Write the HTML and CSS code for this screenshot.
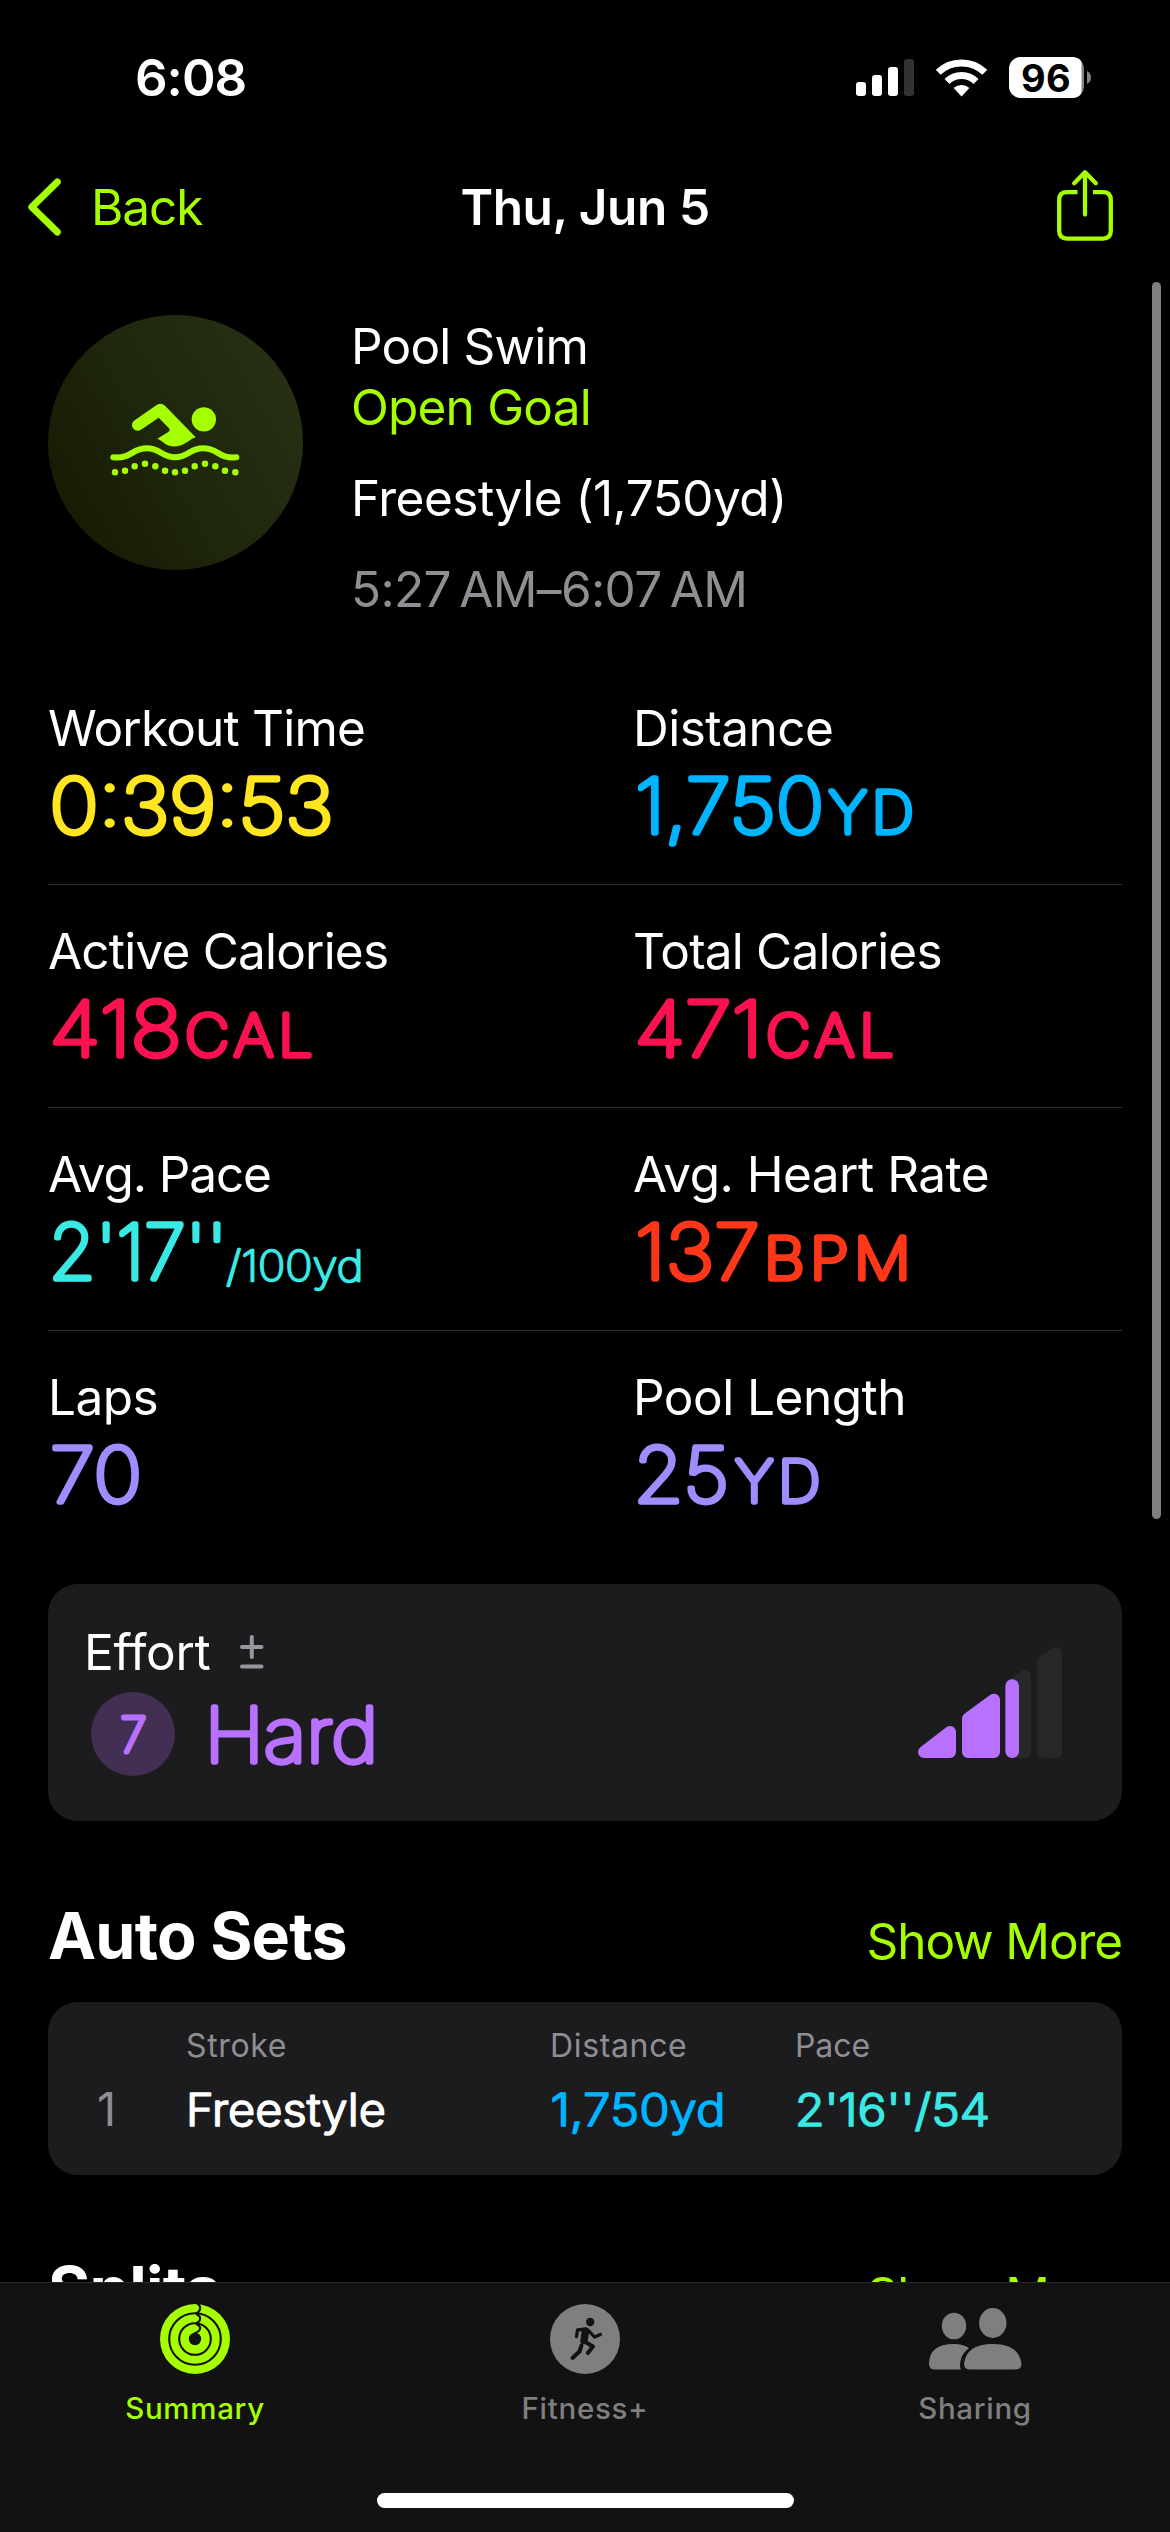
FILE: index.html
```
<!DOCTYPE html>
<html lang="en">
<head>
<meta charset="utf-8">
<title>Workout Summary</title>
<link rel="stylesheet" href="styles.css">
</head>
<body>
<div class="screen">
  <div class="content">
    <div class="status-bar">
      <span class="clock">6:08</span>
      <svg class="status-icons" width="240" height="48" viewBox="0 0 240 48">
        <g fill="#fff">
          <rect x="0" y="27" width="10" height="14" rx="3"/>
          <rect x="16" y="20" width="10" height="21" rx="3"/>
          <rect x="32" y="12" width="10" height="29" rx="3"/>
          <rect x="48" y="4" width="10" height="37" rx="3" fill="#323232"/>
          <path d="M105.5 41.5 L97.6 33 A11.6 11.6 0 0 1 113.4 33 Z"/>
        </g>
        <g fill="none" stroke="#fff" stroke-width="7">
          <path d="M82.2 17.3 A33.6 33.6 0 0 1 128.8 17.3"/>
          <path d="M91 26.5 A20.7 20.7 0 0 1 120 26.5"/>
        </g>
        <rect x="153" y="2" width="75" height="41" rx="12" fill="#838383"/>
        <path fill="#fff" d="M165 2 H217 Q225 3 225.500 8 V37 Q225 42 217 43 H165 A12 12 0 0 1 153 31 V14 A12 12 0 0 1 165 2Z"/>
        <path fill="#838383" d="M231 16 Q235 18 235 22.500 Q235 27 231 29Z"/>
        <text class="battery-level" x="165" y="37.300">96</text>
      </svg>
    </div>

    <div class="nav-bar">
      <div class="back">
        <svg width="38" height="60" viewBox="-2.300 0 38 60"><path d="M31 5 L5.500 30 L31 55" fill="none" stroke="#a6ff00" stroke-width="7" stroke-linecap="round" stroke-linejoin="round"/></svg>
        <span class="tight">Back</span>
      </div>
      <h1 class="title">Thu, Jun 5</h1>
      <svg class="share" width="60" height="75" viewBox="0 0 60 75"><path d="M22.500 24.200 H12 Q4.200 24.200 4.200 32 V62.800 Q4.200 70.600 12 70.600 H48 Q55.800 70.600 55.800 62.800 V32 Q55.800 24.200 48 24.200 H38" fill="none" stroke="#a6ff00" stroke-width="4.300" stroke-linejoin="round"/><path d="M30 46.500 V5 M19.200 15.200 L30 4.300 L40.800 15.200" fill="none" stroke="#a6ff00" stroke-width="4.300" stroke-linecap="round" stroke-linejoin="round"/></svg>
    </div>

    <section class="hero">
      <div class="badge">
        <svg width="130" height="74" viewBox="239 340 390 222">
          <g fill="#a6ff00">
            <circle cx="520.500" cy="389" r="36.500"/>
            <path d="M313 392 L379 346 Q392 337 404 348 L496 443 Q490 444 483 449 Q434 488 397 457 Q389 449 381 447 L414 427 Q421 422 416 416 L385 384 L332 420 Q316 429 307 414 Q301 401 313 392Z"/>
          </g>
          <path d="M249 503 C305 508 303 476 350 476 C391 476 393 503 434 503 C475 503 477 476 518 476 C565 476 563 508 618 503" fill="none" stroke="#a6ff00" stroke-width="18" stroke-linecap="round"/>
          <path d="M254 548h0M284 543h0M313 530h0M344 522h0M375 530h0M404 543h0M434 548h0M464 543h0M493 530h0M524 522h0M555 530h0M584 543h0M615 548h0" fill="none" stroke="#a6ff00" stroke-width="19.500" stroke-linecap="round"/>
        </svg>
      </div>
      <div class="hero-text">
        <span>Pool Swim</span>
        <span class="goal">Open Goal</span>
        <span class="stroke loose">Freestyle (1,750yd)</span>
        <span class="time">5:27 AM–6:07 AM</span>
      </div>
    </section>

    <section class="metrics">
      <div class="row">
        <div class="metric yellow">
          <span class="label">Workout Time</span>
          <svg class="value" width="520" height="82"><text x="1.500" y="75.300" textLength="283.900" lengthAdjust="spacingAndGlyphs">0:39:53</text></svg>
        </div>
        <div class="metric blue">
          <span class="label loose">Distance</span>
          <svg class="value" width="480" height="82"><text x="2" y="75.300" textLength="189" lengthAdjust="spacingAndGlyphs">1,750</text><text class="unit" x="196" y="75.200" textLength="89.600" lengthAdjust="spacingAndGlyphs">YD</text></svg>
        </div>
      </div>
      <div class="row">
        <div class="metric pink">
          <span class="label">Active Calories</span>
          <svg class="value" width="520" height="82"><text x="1.500" y="75.300" textLength="132.200" lengthAdjust="spacingAndGlyphs">418</text><text class="unit" x="137" y="75.200" textLength="133.100" lengthAdjust="spacingAndGlyphs">CAL</text></svg>
        </div>
        <div class="metric pink">
          <span class="label">Total Calories</span>
          <svg class="value" width="480" height="82"><text x="1.500" y="75.300" textLength="128.200" lengthAdjust="spacingAndGlyphs">471</text><text class="unit" x="133" y="75.200" textLength="133.100" lengthAdjust="spacingAndGlyphs">CAL</text></svg>
        </div>
      </div>
      <div class="row">
        <div class="metric teal">
          <span class="label tight">Avg. Pace</span>
          <svg class="value" width="520" height="82"><text x="0.700" y="75.300" textLength="178.500" lengthAdjust="spacingAndGlyphs">2'17''</text><text class="per" x="178.300" y="76.700" textLength="137.100" lengthAdjust="spacingAndGlyphs">/100yd</text></svg>
        </div>
        <div class="metric red">
          <span class="label loose">Avg. Heart Rate</span>
          <svg class="value" width="480" height="82"><text x="2" y="75.300" textLength="124.800" lengthAdjust="spacingAndGlyphs">137</text><text class="unit" x="131" y="75.200" textLength="152.200" lengthAdjust="spacingAndGlyphs">BPM</text></svg>
        </div>
      </div>
      <div class="row">
        <div class="metric violet">
          <span class="label loose">Laps</span>
          <svg class="value" width="520" height="82"><text x="2" y="75.300" textLength="92" lengthAdjust="spacingAndGlyphs">70</text></svg>
        </div>
        <div class="metric violet">
          <span class="label loose">Pool Length</span>
          <svg class="value" width="480" height="82"><text x="0.400" y="75.300" textLength="95.500" lengthAdjust="spacingAndGlyphs">25</text><text class="unit" x="102.500" y="75.200" textLength="89.600" lengthAdjust="spacingAndGlyphs">YD</text></svg>
        </div>
      </div>
    </section>

    <section class="card effort">
      <div class="effort-main">
        <div class="effort-label">
          <span class="effort-name">Effort</span>
          <svg width="26" height="36" viewBox="0 0 26 36"><path d="M3 13 H22.500 M12.800 3 V23 M3 32.500 H22.500" fill="none" stroke="#98979e" stroke-width="4" stroke-linecap="round"/></svg>
        </div>
        <div class="effort-value">
          <div class="score"><svg class="rounded" width="84" height="84"><text class="score-text" x="42.500" y="60.300" text-anchor="middle">7</text></svg></div>
          <svg class="value purple" width="240" height="84"><text x="29.400" y="70.300" textLength="174" lengthAdjust="spacingAndGlyphs">Hard</text></svg>
        </div>
      </div>
      <svg class="effort-bars" width="144" height="111" viewBox="354 231 432 333">
        <g stroke-width="36" stroke-linejoin="round">
          <path fill="#28282a" stroke="#28282a" d="M636 546 V346 L675 318 V546Z M729 546 V278 L768 249 V546Z"/>
          <path fill="#b870ff" stroke="#b870ff" d="M372 546 L450 486 V546Z M504 546 V446 L582 389 V546Z"/>
        </g>
        <rect x="616" y="328" width="41" height="236" rx="20" fill="#b870ff"/>
      </svg>
    </section>

    <div class="section-head"><h2>Auto Sets</h2><span class="more tight">Show More</span></div>
    <section class="card sets">
      <span></span><span class="th">Stroke</span><span class="th">Distance</span><span class="th">Pace</span>
      <span class="index">1</span>
      <svg class="cell white" width="240" height="60"><text x="0" y="49" textLength="200" lengthAdjust="spacingAndGlyphs">Freestyle</text></svg>
      <svg class="cell blue" width="240" height="60"><text x="0.500" y="49" textLength="175" lengthAdjust="spacingAndGlyphs">1,750yd</text></svg>
      <svg class="cell teal" width="240" height="60"><text x="0" y="49" textLength="195" lengthAdjust="spacingAndGlyphs">2'16''/54</text></svg>
    </section>
    <div class="section-head"><h2>Splits</h2><span class="more tight">Show More</span></div>
  </div>

  <nav class="tab-bar">
    <div class="tabs">
      <div class="tab active">
        <svg width="70" height="70" viewBox="0 0 70 70">
          <circle cx="35" cy="35" r="35" fill="#a6ff00"/>
          <g fill="none" stroke="#121212" stroke-width="2.100">
            <circle cx="35" cy="35" r="25.800"/><circle cx="35" cy="35" r="15.800"/>
            <path d="M36.500 -1 Q40.800 1.500 40 5 Q39.500 8 36 9.500 M36 10 Q41 12 40 15.500 Q39.500 18 36 19.300 M36 20 Q41 22 40 25 Q39 28 34 29.500"/>
          </g>
          <circle cx="35" cy="35" r="6.200" fill="#121212"/>
        </svg>
        <span>Summary</span>
      </div>
      <div class="tab">
        <svg width="70" height="70" viewBox="0 0 70 70">
          <circle cx="35" cy="35" r="35" fill="#7f7f7f"/>
          <circle cx="40.200" cy="18" r="4.200" fill="#121212"/>
          <g fill="none" stroke="#121212" stroke-linecap="round" stroke-linejoin="round">
            <path stroke-width="7.500" d="M35.500 27.500 L34 36.500"/>
            <path stroke-width="3.300" d="M36 25 L27.500 26 L26.500 32.500 M38 26 L44.500 33 L50.500 30.500"/>
            <path stroke-width="4" d="M33.500 37 L43 42.500 L37.800 49 M31.500 41.500 L29.500 47.500 L22.500 54"/>
          </g>
        </svg>
        <span>Fitness+</span>
      </div>
      <div class="tab">
        <svg width="93" height="70" viewBox="0 0 93 70">
          <g fill="#7f7f7f">
            <ellipse cx="25" cy="22" rx="12.200" ry="13.300"/>
            <ellipse cx="63.800" cy="19" rx="13.700" ry="15"/>
            <path d="M0 60 Q0 40 25 40 Q34 40 40 44 Q31 51 31 61 Q31 64 32 65.500 H6 Q0 65.500 0 60Z"/>
            <path d="M35 60 Q37 40 64 40 Q90 40 92.500 60 Q92.500 65.500 86 65.500 H41.500 Q35 65.500 35 60Z"/>
          </g>
        </svg>
        <span>Sharing</span>
      </div>
    </div>
    <div class="home-indicator"></div>
  </nav>
  <div class="scroll-thumb"></div>
</div>
</body>
</html>
```
FILE: styles.css
```
* { box-sizing: border-box; margin: 0; padding: 0; }
body { background: #000; color: #fff; font-family: Inter, "Liberation Sans", sans-serif; }
svg { display: block; flex: none; overflow: visible; }
.screen { position: relative; display: flex; flex-direction: column; width: 1170px; height: 2532px; background: #000; font-size: 49.5px; line-height: 60px; letter-spacing: -0.8px; white-space: nowrap; }
.content { flex: 1; min-height: 0; overflow: hidden; padding: 0 48px; }
.tight { letter-spacing: -1.1px; }
.loose { letter-spacing: -0.5px; }

.status-bar { display: flex; justify-content: space-between; height: 165px; padding: 47px 26px 0 87px; }
.clock { font-size: 51px; line-height: 62px; font-weight: 600; letter-spacing: -1px; }
.status-icons { margin-top: 8px; }
.battery-level { font-size: 38px; font-weight: 700; letter-spacing: 0.3px; fill: #000; }

.nav-bar { display: grid; grid-template-columns: 1fr auto 1fr; align-items: center; height: 84px; margin: 0 -24px; }
.back { display: flex; align-items: center; gap: 29px; color: #a6ff00; }
.title { font-size: 49.5px; font-weight: 600; letter-spacing: -0.42px; }
.share { justify-self: end; margin: -3px 31px 0 0; }

.hero { display: flex; gap: 48px; height: 347px; margin-top: 66px; }
.badge { display: flex; align-items: center; justify-content: center; width: 255px; height: 255px; padding: 0 1px 5px 0; border-radius: 50%; background: linear-gradient(60deg, #161a02 8%, #1e260c 45%, #263013 88%); }
.hero-text { display: flex; flex-direction: column; padding-top: 1px; }
.goal { margin-top: 1px; color: #a6ff00; }
.stroke { margin-top: 31px; }
.time { margin-top: 31px; color: #8e8e93; letter-spacing: -0.65px; word-spacing: -5px; }

.row { display: grid; grid-template-columns: 585px 1fr; height: 223px; padding-top: 36px; border-bottom: 1px solid #303030; }
.row:last-child { border-bottom: 0; }
.label { display: block; }
.value, .rounded { stroke-linejoin: round; stroke-linecap: round; letter-spacing: 0; }
.value { font-size: 75.5px; font-weight: 100; fill: currentColor; stroke: currentColor; stroke-width: 5.4px; }
.unit { font-size: 57.4px; letter-spacing: 5px; stroke-width: 5.6px; }
.per { font-size: 42.4px; stroke-width: 2.6px; }
.yellow .value { color: #ffe620; }
.blue .value, .cell.blue { color: #00b5ff; }
.pink .value { color: #fa114f; }
.teal .value, .cell.teal { color: #3ae8e4; }
.red .value { color: #ff3718; }
.violet .value { color: #a18cff; }
.purple { color: #b870ff; }

.card { background: #1c1c1e; border-radius: 30px; }
.effort { display: flex; justify-content: space-between; height: 237px; margin-top: 30px; padding: 38px 60px 0 36px; }
.effort-label { display: flex; align-items: center; gap: 28px; }
.effort-name { letter-spacing: -0.3px; }
.effort-value { display: flex; padding: 10px 0 0 7px; }
.score { width: 84px; height: 84px; border-radius: 50%; background: #432f53; }
.score-text { font-size: 47.5px; font-weight: 100; fill: #b870ff; stroke: #b870ff; stroke-width: 4.8px; }
.effort-bars { margin-top: 25px; }

.section-head { display: flex; justify-content: space-between; align-items: baseline; height: 80px; margin-top: 75px; }
h2 { font-size: 64.5px; line-height: 80px; font-weight: 700; letter-spacing: -0.8px; }
.more { color: #a6ff00; }
.sets { display: grid; grid-template-columns: 138px 364px 245px 1fr; grid-template-rows: 40px 60px; row-gap: 11px; height: 173px; margin-top: 26px; padding-top: 24px; }
.th { font-size: 32px; line-height: 40px; letter-spacing: 0.65px; color: #8e8e93; }
.th:nth-child(4) { letter-spacing: -0.1px; }
.index { padding: 2px 0 0 49px; font-size: 47px; line-height: 60px; color: #8e8e93; }
.cell { font-size: 44.6px; font-weight: 300; letter-spacing: 0; fill: currentColor; stroke: currentColor; stroke-width: 1.6px; stroke-linejoin: round; }
.white { color: #fff; }

.tab-bar { height: 250px; padding-top: 21px; border-top: 1px solid #2a2a2a; background: #121212; }
.tabs { display: grid; grid-template-columns: repeat(3, 1fr); height: 189px; }
.tab { display: flex; flex-direction: column; align-items: center; gap: 16px; color: #7f7f7f; font-size: 29.5px; line-height: 36px; font-weight: 500; letter-spacing: 0.7px; }
.tab.active { color: #a6ff00; }
.home-indicator { width: 417px; height: 15px; margin: 0 auto; border-radius: 8px; background: #fff; }
.scroll-thumb { position: absolute; top: 282px; left: 1152px; width: 9px; height: 1237px; border-radius: 5px; background: #7f7f7f; }
```
